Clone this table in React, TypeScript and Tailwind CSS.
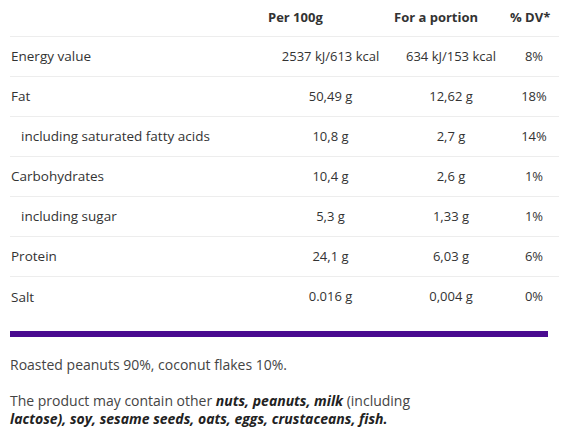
import React from 'react';

type Row = { label: string; per100: string; portion: string; dv: string; sub?: boolean };

const rows: Row[] = [
  { label: 'Energy value', per100: '2537 kJ/613 kcal', portion: '634 kJ/153 kcal', dv: '8%' },
  { label: 'Fat', per100: '50,49 g', portion: '12,62 g', dv: '18%' },
  { label: 'including saturated fatty acids', per100: '10,8 g', portion: '2,7 g', dv: '14%', sub: true },
  { label: 'Carbohydrates', per100: '10,4 g', portion: '2,6 g', dv: '1%' },
  { label: 'including sugar', per100: '5,3 g', portion: '1,33 g', dv: '1%', sub: true },
  { label: 'Protein', per100: '24,1 g', portion: '6,03 g', dv: '6%' },
  { label: 'Salt', per100: '0.016 g', portion: '0,004 g', dv: '0%' },
];

const App: React.FC = () => {
  return (
    <div className="w-[563px] h-[439px] bg-white text-[#333] overflow-hidden font-['Open_Sans','Liberation_Sans',sans-serif]">
      {/* Nutrition table */}
      <div className="ml-[10px] w-[549px] text-[13px]">
        <div className="grid grid-cols-[258px_125px_116px_50px] h-[37px] items-center font-bold border-b border-[#ededed]">
          <div />
          <div>Per 100g</div>
          <div className="pl-px">For a portion</div>
          <div className="pl-px">% DV*</div>
        </div>
        {rows.map((r, i) => (
          <div
            key={r.label}
            className={`grid grid-cols-[258px_125px_116px_50px] h-[40px] items-center ${
              i < rows.length - 1 ? 'border-b border-[#ededed]' : ''
            }`}
          >
            <div className={`text-[13.5px] ${r.sub ? 'pl-[11px]' : 'pl-px'}`}>{r.label}</div>
            <div className="text-center">{r.per100}</div>
            <div className="text-center">{r.portion}</div>
            <div className="text-center">{r.dv}</div>
          </div>
        ))}
      </div>

      <div className="ml-[10px] w-[538px] h-[6px] bg-[#4a0b90] mt-[14px]" />

      {/* Composition */}
      <div className="px-[10px] mt-[19px] text-[14px] leading-[18px] text-[#444]">
        <p>Roasted peanuts 90%, coconut flakes 10%.</p>
        <p className="mt-[18px]">
          The product may contain other{' '}
          <b className="italic font-bold text-[#222]">nuts, peanuts, milk</b> (including
          <br />
          <b className="italic font-bold text-[#222]">lactose), soy, sesame seeds, oats, eggs, crustaceans, fish.</b>
        </p>
      </div>
    </div>
  );
};

export default App;
